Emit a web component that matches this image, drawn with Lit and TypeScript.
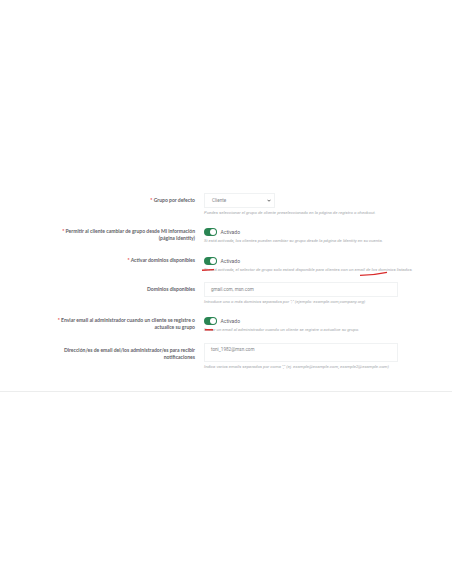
import { LitElement, html, css } from "lit";
import { customElement } from "lit/decorators.js";

@customElement("app-root")
export class AppRoot extends LitElement {
  static styles = css`
    :host {
      display: block;
      position: relative;
      width: 452px;
      height: 584px;
      background: #fff;
      overflow: hidden;
      font-family: "Lato", "Open Sans", sans-serif;
      color: #4a4a4a;
    }
    .form {
      display: grid;
      grid-template-columns: 195px 194px;
      grid-template-rows: 35px 29px 25px 35px 26px 47.5px;
      column-gap: 9px;
      padding-top: 193px;
      border-bottom: 1px solid #eceded;
    }
    .label {
      text-align: right;
      font-size: 5.05px;
      font-weight: 700;
      line-height: 7.3px;
      color: #5f6268;
      padding: 3.5px 0 0 50px;
    }
    .toggle-label { padding-top: 0; }
    .req { color: #e8504f; }
    .field { min-width: 0; }
    .select {
      display: flex;
      align-items: center;
      justify-content: space-between;
      box-sizing: border-box;
      width: 71px;
      height: 15px;
      padding: 0 3px 0 7px;
      border: 1px solid #f0f2f3;
      font-size: 4.6px;
      font-family: "Roboto", sans-serif;
      color: #85878b;
    }
    .select svg { width: 4px; height: 3px; }
    .input {
      box-sizing: border-box;
      width: 194px;
      height: 15px;
      padding: 0 6px;
      border: 1px solid #f0f2f3;
      font-size: 4.6px;
      line-height: 13px;
      font-family: "Roboto", sans-serif;
      color: #85878b;
    }
    .area {
      box-sizing: border-box;
      width: 194px;
      height: 19px;
      padding: 1.5px 6px;
      border: 1px solid #f0f2f3;
      font-size: 4.6px;
      line-height: 7px;
      font-family: "Roboto", sans-serif;
      color: #85878b;
    }
    .hint {
      margin-top: 2px;
      font-size: 4.35px;
      line-height: 6px;
      font-style: italic;
      font-family: "Roboto", sans-serif;
      color: #a6a9ad;
      white-space: nowrap;
    }
    .toggle-row {
      display: flex;
      align-items: center;
      gap: 3.5px;
      height: 8px;
      font-size: 5px;
      font-family: "Roboto", sans-serif;
      color: #5f6268;
    }
    .toggle {
      display: flex;
      justify-content: flex-end;
      align-items: center;
      box-sizing: border-box;
      width: 13px;
      height: 8px;
      padding-right: 0.8px;
      border-radius: 999px;
      background: #2a8553;
    }
    .knob {
      width: 6.4px;
      height: 6.4px;
      border-radius: 50%;
      background: #fff;
    }
    .toggle-hint { margin-top: 2.4px; }
    .marks {
      position: absolute;
      inset: 0;
      width: 452px;
      height: 584px;
      pointer-events: none;
    }
  `;

  private toggle() {
    return html`<div class="toggle-row">
      <span class="toggle"><span class="knob"></span></span><span>Activado</span>
    </div>`;
  }

  render() {
    return html`
      <div class="form">
        <div class="label"><span class="req">*</span> Grupo por defecto</div>
        <div class="field">
          <div class="select">
            <span>Cliente</span>
            <svg viewBox="0 0 8 6"><path d="M1 1.5 4 4.5 7 1.5" fill="none" stroke="#444" stroke-width="1.6" /></svg>
          </div>
          <div class="hint">Puedes seleccionar el grupo de cliente preseleccionado en la página de registro o checkout.</div>
        </div>

        <div class="label toggle-label"><span class="req">*</span> Permitir al cliente cambiar de grupo desde Mi información (página Identity)</div>
        <div class="field">
          ${this.toggle()}
          <div class="hint toggle-hint">Si está activada, los clientes pueden cambiar su grupo desde la página de Identity en su cuenta.</div>
        </div>

        <div class="label toggle-label"><span class="req">*</span> Activar dominios disponibles</div>
        <div class="field">
          ${this.toggle()}
          <div class="hint toggle-hint">Si está activada, el selector de grupo solo estará disponible para clientes con un email de los dominios listados.</div>
        </div>

        <div class="label">Dominios disponibles</div>
        <div class="field">
          <div class="input">gmail.com, msn.com</div>
          <div class="hint">Introduce uno o más dominios separados por ";" (ejemplo: example.com,company.org)</div>
        </div>

        <div class="label toggle-label"><span class="req">*</span> Enviar email al administrador cuando un cliente se registre o actualice su grupo</div>
        <div class="field">
          ${this.toggle()}
          <div class="hint toggle-hint">Enviar un email al administrador cuando un cliente se registre o actualice su grupo.</div>
        </div>

        <div class="label">Dirección/es de email del/los administrador/es para recibir notificaciones</div>
        <div class="field">
          <div class="area">toni_1982@msn.com</div>
          <div class="hint">Indica varios emails separados por coma "," (ej. example@example.com, example2@example.com)</div>
        </div>
      </div>
      <svg class="marks" viewBox="0 0 452 584">
        <path d="M202 270.3 214 269.6" stroke="#d92b2b" stroke-width="1.4" fill="none" />
        <path d="M360 275.4C370 275.2 379 274 387 272.3" stroke="#d92b2b" stroke-width="1.3" fill="none" />
        <path d="M205 329.8H213" stroke="#d92b2b" stroke-width="1.5" fill="none" />
      </svg>
    `;
  }
}
